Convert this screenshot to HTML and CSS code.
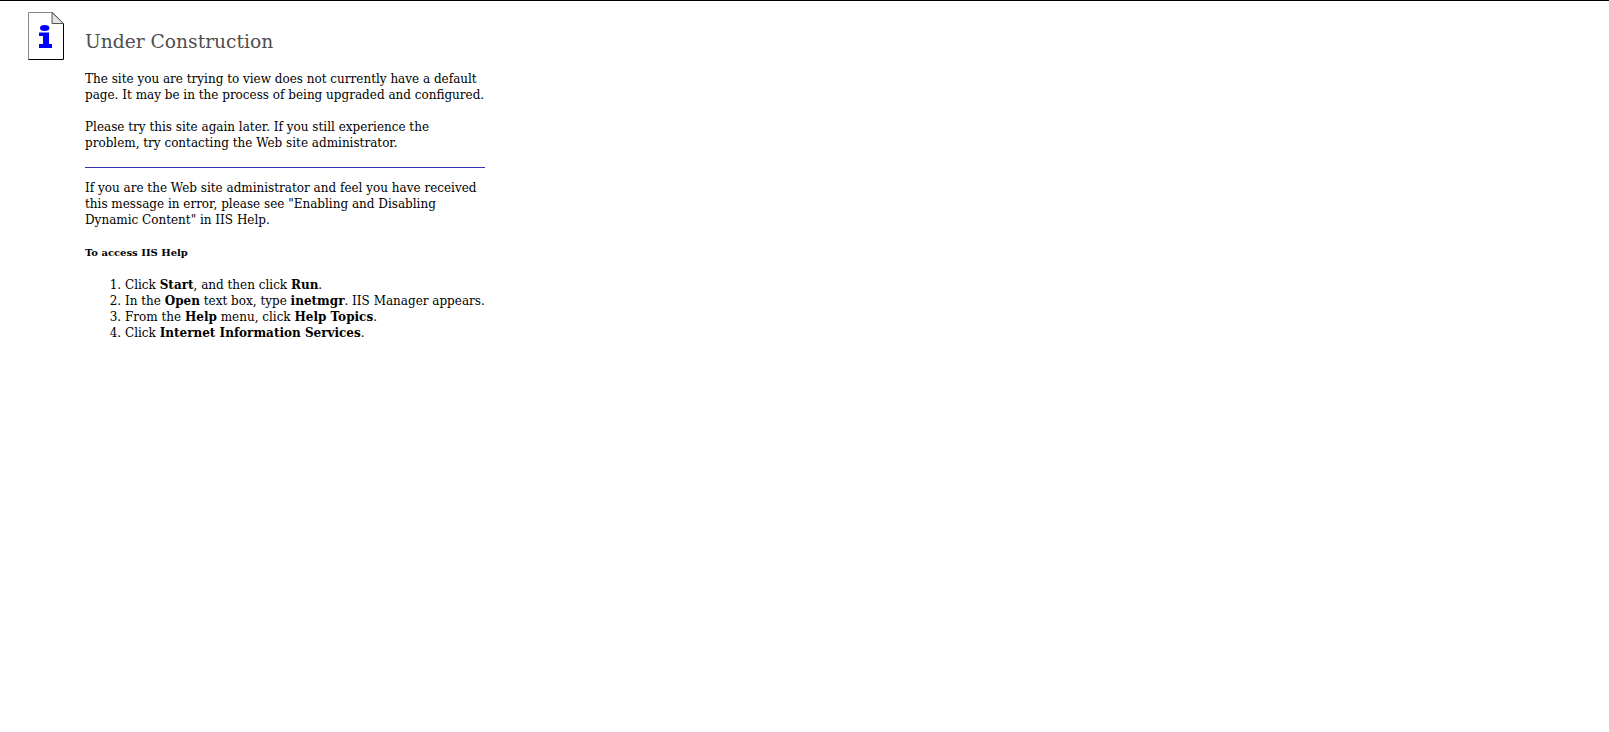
FILE: index.html
```html
<!DOCTYPE html>
<html lang="en">
<head>
<meta charset="utf-8">
<title>The site you are trying to view does not currently have a default page.</title>
<link rel="stylesheet" href="styles.css">
</head>
<body>
<div class="layout">
  <div class="icon-col">
    <svg class="doc-icon" width="36" height="48" viewBox="0 0 36 48" aria-hidden="true">
      <path d="M0.5 0.5H24L35.5 11.5V47.5H0.5Z" fill="#fff"/>
      <path d="M0.5 47.5V0.5H24" fill="none" stroke="#888"/>
      <path d="M24 0.5L35.5 11.5V47.5H0.5" fill="none" stroke="#000"/>
      <path d="M24 0.5V11.5H35.5Z" fill="#e4e4e4" stroke="#555"/>
      <ellipse cx="16.7" cy="16" rx="4.7" ry="3" fill="#00f"/>
      <path d="M11 20.5H21V32H24V36H11V32H15V24H11Z" fill="#00f"/>
    </svg>
  </div>
  <main class="content">
    <h1 class="title">Under Construction</h1>
    <p class="para">The site you are trying to view does not currently have a default page. It may be in the process of being upgraded and configured.</p>
    <p class="para">Please try this site again later. If you still experience the problem, try contacting the Web site administrator.</p>
    <hr class="rule">
    <p class="para">If you are the Web site administrator and feel you have received this message in error, please see "Enabling and Disabling Dynamic Content" in IIS Help.</p>
    <h5 class="subhead">To access IIS Help</h5>
    <ol class="steps">
      <li>Click <b>Start</b>, and then click <b>Run</b>.</li>
      <li>In the <b>Open</b> text box, type <b>inetmgr</b>. IIS Manager appears.</li>
      <li>From the <b>Help</b> menu, click <b>Help Topics</b>.</li>
      <li>Click <b>Internet Information Services</b>.</li>
    </ol>
  </main>
</div>
</body>
</html>
```
FILE: styles.css
```css
html, body {
  margin: 0;
  padding: 0;
  background: #fff;
}
body {
  border-top: 1px solid #000;
  font-family: "DejaVu Serif", serif;
  font-size: 12px;
  line-height: 16px;
  color: #000;
}
.layout {
  display: flex;
  align-items: flex-start;
  padding: 11px 0 0 28px;
}
.icon-col {
  width: 57px;
  flex: none;
}
.doc-icon {
  display: block;
}
.content {
  width: 400px;
  flex: none;
}
.title {
  margin: 19px 0 0;
  font-size: 18.67px;
  line-height: 22px;
  font-weight: normal;
  color: #4e4e4e;
}
.para {
  margin: 16px 0 0;
}
.title + .para {
  margin-top: 18px;
}
.rule {
  height: 1px;
  margin: 16px 0 0;
  border: 0;
  background: #3333b0;
}
.rule + .para {
  margin-top: 12px;
}
.subhead {
  margin: 17px 0 0;
  font-size: 10px;
  font-weight: bold;
}
.steps {
  margin: 16px 0 0;
  padding: 0 0 0 40px;
}
```
